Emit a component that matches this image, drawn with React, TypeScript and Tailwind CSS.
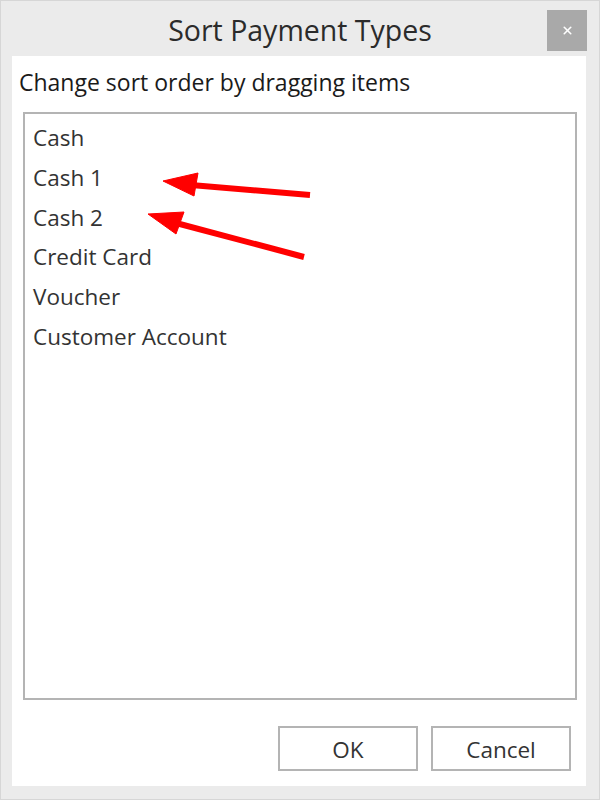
import { X } from 'lucide-react'

const paymentTypes = ['Cash', 'Cash 1', 'Cash 2', 'Credit Card', 'Voucher', 'Customer Account']

/** Red callout arrows drawn over the list, pointing at the two new cash entries. */
function Callouts() {
  return (
    <svg className="pointer-events-none absolute left-0 top-0" width="600" height="800">
      <g fill="#ff0000" stroke="#ff0000" strokeLinecap="butt">
        <line x1="309" y1="194" x2="190" y2="184" strokeWidth="6" />
        <polygon points="162,180 197,172 193,195" strokeWidth="1" />
        <line x1="303" y1="256" x2="175" y2="222" strokeWidth="6" />
        <polygon points="147,213 183,211 175,233" strokeWidth="1" />
      </g>
    </svg>
  )
}

export default function App() {
  return (
    <div
      className="relative flex h-[800px] w-[600px] flex-col border border-[#d6d6d6] bg-[#ebebeb] text-[#333333]"
      style={{ fontFamily: '"Open Sans", "Noto Sans", sans-serif' }}
    >
      <div className="grid h-[55px] grid-cols-[1fr_auto_1fr] items-center">
        <div />
        <h1 className="pt-[3px] text-[28.5px] leading-none text-[#2b2b2b]">Sort Payment Types</h1>
        <div className="flex justify-end pr-[12px] pt-[4px]">
          <button className="flex h-[41px] w-[40px] items-center justify-center bg-[#a9a9a9] text-white">
            <X size={13} strokeWidth={3} />
          </button>
        </div>
      </div>

      <div className="mb-[13px] ml-[11px] mr-[13px] flex flex-1 flex-col bg-white">
        <p className="pl-[7px] pt-[10px] text-[23px] leading-[32px] text-[#1a1a1a]">
          Change sort order by dragging items
        </p>

        <ul className="mb-[26px] ml-[11px] mr-[9px] mt-[14px] flex-1 border-2 border-[#b4b4b4] pt-[7px]">
          {paymentTypes.map((name) => (
            <li key={name} className="h-[39.8px] pl-[8px] text-[22.5px] leading-[34px]">
              {name}
            </li>
          ))}
        </ul>

        <div className="flex justify-end gap-[13px] pb-[15px] pr-[15px]">
          <button className="h-[45px] w-[140px] border-2 border-[#b4b4b4] bg-white pt-[3px] text-[22.5px] text-[#333333]">
            OK
          </button>
          <button className="h-[45px] w-[140px] border-2 border-[#b4b4b4] bg-white pt-[3px] text-[22.5px] text-[#333333]">
            Cancel
          </button>
        </div>
      </div>

      <Callouts />
    </div>
  )
}
